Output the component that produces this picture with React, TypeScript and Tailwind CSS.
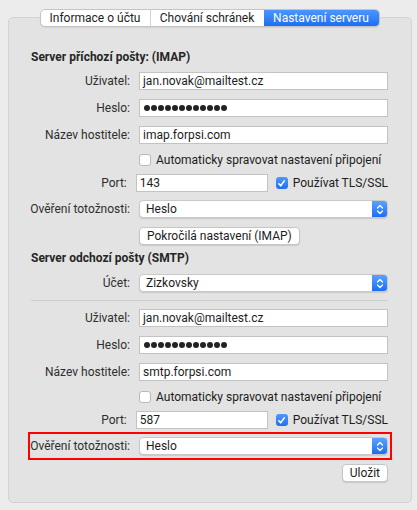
import React from 'react'

const font = { fontFamily: 'Roboto, "Liberation Sans", Arial, sans-serif' }

function Field({ value, w = 'w-[249px]' }: { value: React.ReactNode; w?: string }) {
  return (
    <div className={`${w} h-[18px] bg-white border border-[#c3c3c3] flex items-center pl-[3px] text-[12px] text-[#1d1d1d] whitespace-nowrap`}>
      {value}
    </div>
  )
}

function Dots() {
  return (
    <div className="flex gap-[1px] pl-[1px]">
      {Array.from({ length: 12 }).map((_, i) => (
        <span key={i} className="w-[6px] h-[6px] rounded-full bg-[#222]" />
      ))}
    </div>
  )
}

function Popup({ value }: { value: string }) {
  return (
    <div className="w-[249px] h-[18px] bg-white rounded-[4px] border border-[#c9c9c9] shadow-[0_1px_1px_rgba(0,0,0,0.12)] flex items-center overflow-hidden">
      <span className="flex-1 pl-[6px] text-[12px] text-[#1d1d1d]">{value}</span>
      <div className="w-[15px] h-full bg-gradient-to-b from-[#5aa2ff] to-[#1a6cf3] flex items-center justify-center">
        <svg width="8" height="11" viewBox="0 0 8 11" fill="none" stroke="white" strokeWidth="1.3" strokeLinecap="round" strokeLinejoin="round">
          <path d="M1.5 4 L4 1.5 L6.5 4" />
          <path d="M1.5 7 L4 9.5 L6.5 7" />
        </svg>
      </div>
    </div>
  )
}

function Row({ label, children, className = '' }: { label: string; children: React.ReactNode; className?: string }) {
  return (
    <div className={`flex items-center h-[18px] ${className}`}>
      <div className="w-[99px] flex justify-end text-[12px] text-[#2e2e2e] whitespace-nowrap">{label}</div>
      <div className="ml-[9px] flex items-center">{children}</div>
    </div>
  )
}

function Check({ checked }: { checked?: boolean }) {
  if (checked) {
    return (
      <span className="shrink-0 w-[12px] h-[12px] rounded-[3px] bg-gradient-to-b from-[#4f97ff] to-[#1e6ff3] flex items-center justify-center">
        <svg width="9" height="9" viewBox="0 0 9 9" fill="none" stroke="white" strokeWidth="1.6" strokeLinecap="round" strokeLinejoin="round">
          <path d="M1.8 4.8 L3.7 6.8 L7.3 1.9" />
        </svg>
      </span>
    )
  }
  return <span className="shrink-0 w-[12px] h-[12px] rounded-[3px] bg-white border border-[#b9b9b9]" />
}

function Button({ children }: { children: React.ReactNode }) {
  return (
    <div className="h-[18px] px-[7px] bg-white rounded-[4px] border border-[#c6c6c6] shadow-[0_1px_1px_rgba(0,0,0,0.12)] flex items-center text-[12px] text-[#1d1d1d] whitespace-nowrap">
      {children}
    </div>
  )
}

function ServerBlock({ user, host, port }: { user: string; host: string; port: string }) {
  return (
    <>
      <Row label="Uživatel:"><Field value={user} /></Row>
      <Row label="Heslo:" className="mt-[9px]"><Field value={<Dots />} /></Row>
      <Row label="Název hostitele:" className="mt-[9px]"><Field value={host} /></Row>
      <div className="mt-[10px] ml-[108px] h-[12px] flex items-center gap-[5px] text-[12px] text-[#1d1d1d] whitespace-nowrap">
        <Check />
        <span>Automaticky spravovat nastavení připojení</span>
      </div>
      <Row label="Port:" className="mt-[8px]">
        <Field value={port} w="w-[132px]" />
        <div className="ml-[8px] flex items-center gap-[5px] text-[12px] text-[#1d1d1d] whitespace-nowrap">
          <Check checked />
          <span>Používat TLS/SSL</span>
        </div>
      </Row>
    </>
  )
}

export default function App() {
  const tabs = [
    { name: 'Informace o účtu', w: 'w-[109px]' },
    { name: 'Chování schránek', w: 'w-[114px]' },
    { name: 'Nastavení serveru', w: 'w-[115px]', active: true },
  ]

  return (
    <div className="w-[417px] h-[510px] bg-[#ececec] pt-[9px] px-[8px] leading-[16px]" style={font}>
      {/* Tabs */}
      <div className="relative z-10 flex justify-center pl-[2px]">
        <div className="flex h-[18px] rounded-[5px] border border-[#c4c4c4] bg-white shadow-[0_1px_1px_rgba(0,0,0,0.08)] overflow-hidden">
          {tabs.map((t, i) => (
            <div
              key={t.name}
              className={`${t.w} flex items-center justify-center text-[12px] whitespace-nowrap ${
                t.active
                  ? 'bg-gradient-to-b from-[#4b96ff] to-[#1b6ef3] text-white'
                  : 'text-[#1d1d1d]'
              } ${i > 0 && !t.active ? 'border-l border-[#d4d4d4]' : ''}`}
            >
              {t.name}
            </div>
          ))}
        </div>
      </div>

      {/* Panel */}
      <div className="-mt-[10px] h-[486px] w-[404px] rounded-[5px] border border-[#d3d3d3] bg-[#e3e3e3] pt-[31px] pl-[22px]">
        <div className="w-[357px]">
          <div className="text-[12px] font-bold text-[#262626]">Server příchozí pošty: (IMAP)</div>
          <div className="mt-[7px]">
            <ServerBlock user="jan.novak@mailtest.cz" host="imap.forpsi.com" port="143" />
          </div>
          <Row label="Ověření totožnosti:" className="mt-[8px]"><Popup value="Heslo" /></Row>
          <div className="mt-[9px] ml-[108px] flex"><Button>Pokročilá nastavení (IMAP)</Button></div>

          <div className="mt-[5px] text-[12px] font-bold text-[#262626]">Server odchozí pošty (SMTP)</div>
          <Row label="Účet:" className="mt-[8px]"><Popup value="Zizkovsky" /></Row>
          <div className="mt-[8px] h-px bg-[#cdcdcd]" />
          <div className="mt-[8px]">
            <ServerBlock user="jan.novak@mailtest.cz" host="smtp.forpsi.com" port="587" />
          </div>
          <div className="mt-[3px] -ml-[3px] -mr-[4px] border-2 border-[#ff0000] pl-[1px] pr-[2px] py-[3px]">
            <Row label="Ověření totožnosti:"><Popup value="Heslo" /></Row>
          </div>
          <div className="mt-[4px] flex justify-end"><Button>Uložit</Button></div>
        </div>
      </div>
    </div>
  )
}
